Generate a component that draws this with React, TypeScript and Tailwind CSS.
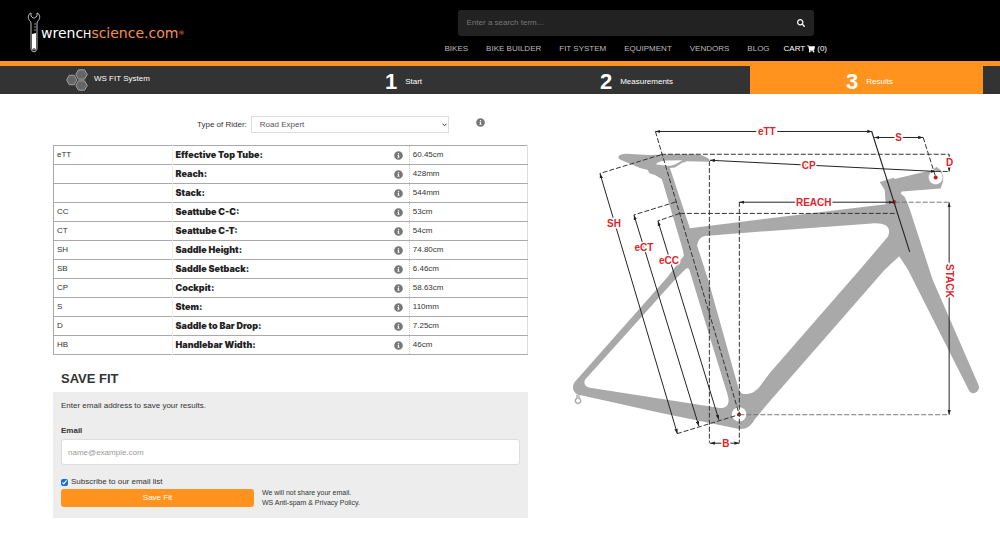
import { useState } from "react";
import { FaInfoCircle, FaSearch, FaShoppingCart } from "react-icons/fa";

type Measurement = {
  code: string;
  label: string;
  value: string;
};

const navLinks = ["BIKES", "BIKE BUILDER", "FIT SYSTEM", "EQUIPMENT", "VENDORS", "BLOG"];

const measurements: Measurement[] = [
  { code: "eTT", label: "Effective Top Tube:", value: "60.45cm" },
  { code: "", label: "Reach:", value: "428mm" },
  { code: "", label: "Stack:", value: "544mm" },
  { code: "CC", label: "Seattube C-C:", value: "53cm" },
  { code: "CT", label: "Seattube C-T:", value: "54cm" },
  { code: "SH", label: "Saddle Height:", value: "74.80cm" },
  { code: "SB", label: "Saddle Setback:", value: "6.46cm" },
  { code: "CP", label: "Cockpit:", value: "58.63cm" },
  { code: "S", label: "Stem:", value: "110mm" },
  { code: "D", label: "Saddle to Bar Drop:", value: "7.25cm" },
  { code: "HB", label: "Handlebar Width:", value: "46cm" },
];

function Logo() {
  return (
    <a href="#" className="flex items-center" aria-label="wrenchscience.com">
      <svg width="14" height="42" viewBox="0 0 14 42" fill="none" stroke="#d4d4d4">
        <path
          d="M4 1 C1 2 0.5 6 2.5 8.5 C3.5 9.5 4 10 4 12 V36 C4 41 10 41 10 36 V12 C10 10 10.5 9.5 11.5 8.5 C13.5 6 13 2 10 1 V4 L7.5 6 H6 L4 4 Z"
          strokeWidth="0.9"
        />
        <path d="M5 22 L9 21 V36 C9 39 5 39 5 36 Z" fill="#fff" stroke="none" />
        <path d="M9 12h-2M9 15h-2M9 18h-2" strokeWidth="0.7" />
        <circle cx="7" cy="37" r="1" fill="#555" stroke="none" />
      </svg>
      <span className="flex items-baseline pt-[2px] font-['DejaVu_Sans'] text-[14px] leading-5 text-white">
        wrenc<span className="text-[11px]">H</span>
        <span className="text-[#f2934a]">science.com</span>
        <sup className="text-[6px] text-[#f2934a]">®</sup>
      </span>
    </a>
  );
}

function Header() {
  return (
    <header className="flex justify-between border-b-[5px] border-[#ff931e] bg-black pl-[27px]">
      <div className="pt-3">
        <Logo />
      </div>
      <div className="mr-[173px] pt-[10px]">
        <form className="mx-[13px] flex h-[26px] items-center rounded-[3px] bg-[#222] px-[9px]">
          <input
            type="search"
            aria-label="Search"
            placeholder="Enter a search term..."
            className="min-w-0 flex-1 bg-transparent text-white outline-none placeholder:text-[#777]"
          />
          <button type="submit" aria-label="Submit search" className="text-white">
            <FaSearch size={8} />
          </button>
        </form>
        <nav className="flex h-[25px] items-center gap-[18px] text-[#bbb]">
          {navLinks.map((link) => (
            <a key={link} href="#">
              {link}
            </a>
          ))}
          <a href="#" className="-ml-1 flex items-center gap-[2px] text-white">
            CART <FaShoppingCart size={8} /> (0)
          </a>
        </nav>
      </div>
    </header>
  );
}

function Hexagons() {
  return (
    <svg width="22" height="22" viewBox="0 0 22 22" fill="#666" stroke="#aaa" strokeWidth="0.9">
      <path d="M12.5 0.8h6l2.8 4.7-2.8 4.7h-6L9.8 5.5z" />
      <path d="M3.2 6.3h5l2.6 4.7-2.6 4.7h-5L0.6 11z" />
      <path d="M12.5 11.8h6l2.8 4.7-2.8 4.7h-6l-2.7-4.7z" />
    </svg>
  );
}

function Steps() {
  const steps = ["Start", "Measurements", "Results"];
  return (
    <div className="bg-[#333] pl-[51px] pr-[17px] text-white">
      <ol className="grid h-7 grid-cols-4">
        <li className="flex items-center gap-[6px] pl-[15px]">
          <Hexagons />
          <span className="pb-[3px]">WS FIT System</span>
        </li>
        {steps.map((step, index) => (
          <li
            key={step}
            className={`flex items-center justify-center gap-2 pl-[6px] pt-[3px] ${
              index === 2 ? "bg-[#ff931e]" : ""
            }`}
          >
            <span className="text-[22px] font-bold leading-6">{index + 1}</span>
            <span>{step}</span>
          </li>
        ))}
      </ol>
    </div>
  );
}

function FitTable() {
  return (
    <table className="w-full table-fixed border-collapse border border-[#aaa] border-r-[#ddd]">
      <colgroup>
        <col className="w-[25%]" />
        <col className="w-[50%]" />
        <col className="w-[25%]" />
      </colgroup>
      <tbody>
        {measurements.map((row) => (
          <tr key={row.label} className="h-[19px] border-b border-[#aaa]">
            <td className="pl-[3px]">{row.code}</td>
            <th
              scope="row"
              className="border-l border-[#eee] pl-[3px] pr-[6px] text-left font-['Inter'] text-[9px] font-black text-[#222]"
            >
              <span className="flex items-center justify-between">
                {row.label}
                <FaInfoCircle size={9} className="text-[#777]" />
              </span>
            </th>
            <td className="border-l border-dotted border-[#ccc] pl-[3px]">{row.value}</td>
          </tr>
        ))}
      </tbody>
    </table>
  );
}

function SaveFit() {
  const [subscribed, setSubscribed] = useState(true);
  return (
    <section>
      <h2 className="px-2 pb-[5px] pt-4 text-[13px] font-bold leading-4">SAVE FIT</h2>
      <form className="bg-[#ededed] px-2 pb-[10px] pt-2">
        <p className="leading-3">Enter email address to save your results.</p>
        <label htmlFor="email" className="mt-[13px] block font-bold leading-3">
          Email
        </label>
        <input
          id="email"
          type="email"
          placeholder="name@example.com"
          className="mt-[2px] block h-[26px] w-full rounded-[3px] border border-[#ddd] bg-white px-[6px] outline-none placeholder:text-[#999]"
        />
        <div className="mt-[11px] flex items-center gap-[3px] leading-3">
          <input
            id="subscribe"
            type="checkbox"
            checked={subscribed}
            onChange={(e) => setSubscribed(e.target.checked)}
            className="size-[7px] accent-[#0b6fd6]"
          />
          <label htmlFor="subscribe">Subscribe to our email list</label>
        </div>
        <div className="flex items-center gap-2">
          <button type="submit" className="h-[18px] w-[42%] rounded-[3px] bg-[#ff931e] text-white">
            Save Fit
          </button>
          <p className="text-[7px] leading-[10px]">
            We will not share your email.
            <br />
            WS Anti-spam &amp; Privacy Policy.
          </p>
        </div>
      </form>
    </section>
  );
}

function BikeDiagram() {
  return (
    <svg
      viewBox="560 110 440 350"
      className="block w-full font-['Liberation_Sans']"
      role="img"
      aria-label="Bike fit dimensions"
    >
      <defs>
        <marker id="arrow" viewBox="0 0 6 4" refX="6" refY="2" markerWidth="5" markerHeight="4" orient="auto-start-reverse">
          <path d="M0 0L6 2L0 4z" fill="#222" />
        </marker>
      </defs>

      {/* Frame, saddle, stem and fork */}
      <path
        fill="#a9a9a9"
        fillRule="evenodd"
        d="M618.3 157.5C618.5 155 622 153.8 627 153.8L648 155L661 154.8L672 154.2L690 154.3C701 154.3 706 156 710 160L708.5 161.7L687 161.2L682 163L675 167.5L670 168L690 228.3L770 218.3L886 204.3L885 190L880 182L894 177.7L895 179L922 172.5L933 170.5L936.7 166.7L942 171L943.5 181L941 188.6L902 191.5L901 193.5L905 197L909 206L933 280L979 385.5C981 393 972 396 969.5 391L908.3 270L899.5 256.5L885 270L770 401.5L755 419.5C750 427.5 746 430 738 429L660 413L581 395.5C574 395 571 388 574.5 382.5L667 278L684 256L683 250L663.3 183.5L661.7 179L655 175L649.3 173.3L648 170L640 168L620 159.5Z
           M655.7 164.3C658 162 662 160.7 667 160.5L682.7 160.3L675 164.5C671 166.5 664 165.8 655.7 164.3Z
           M705 236.2L770 231L872 223.5C886 222.5 892 227 888.3 236.7L860 270L770 373.3L760 386.7C754 393.5 750 394.5 743.3 394.3C741 393.5 739.5 391 738.5 388L708.3 280L697.3 246C698 240 701 237 705 236.2Z
           M675 280L686 269Q688.5 267.5 689.5 270L706.7 326.7L728 396C730 403 728 408.5 720 408.3L590 388C585 387 583.5 384 585 380Z"
      />
      <path d="M577 395v3.5a2.7 2.7 0 1 0 2 0v-3" fill="none" stroke="#a9a9a9" strokeWidth="1.4" />
      <circle cx="936" cy="177.5" r="7.3" fill="#fff" stroke="#a9a9a9" strokeWidth="0.7" />
      <circle cx="739.3" cy="414.7" r="7.2" fill="#fff" />
      <circle cx="936" cy="177.5" r="2" fill="#c9151e" />
      <circle cx="894.5" cy="202" r="2" fill="#c9151e" />
      <circle cx="739.3" cy="414.7" r="2" fill="#c9151e" />

      {/* Reference lines */}
      <g fill="none" stroke="#333" strokeWidth="1" strokeDasharray="5 2">
        <path d="M655.5 131.5L739.5 415" />
        <path d="M661 154.8L600 173.5" />
        <path d="M661 154.3H949.5" />
        <path d="M676 202L634 215" />
        <path d="M680 213.5L658 221" />
        <path d="M680 213.5H898" />
        <path d="M709.5 161V443" />
        <path d="M739.5 202V443" />
        <path d="M677 434L739 415" />
        <path d="M923.5 137.5L936 177" />
        <path d="M936 171.5H949.5" />
      </g>
      <g fill="none" stroke="#777" strokeWidth="1" strokeDasharray="5 2">
        <path d="M895 202.3H949.5" />
        <path d="M739.5 415H949.5" />
      </g>

      {/* Dimension lines, broken where a label sits on them */}
      <path d="M872 131.5L910 252" stroke="#222" strokeWidth="1.1" />
      <g fill="none" stroke="#222" strokeWidth="1">
        <path d="M756.5 131.5H655.5" markerEnd="url(#arrow)" />
        <path d="M777.5 131.5H872.5" markerEnd="url(#arrow)" />
        <path d="M600 173.5L677.5 434" markerStart="url(#arrow)" markerEnd="url(#arrow)" />
        <path d="M634 215L699 426.5" markerStart="url(#arrow)" markerEnd="url(#arrow)" />
        <path d="M658 221L719 420" markerStart="url(#arrow)" markerEnd="url(#arrow)" />
        <path d="M710 160.3L936 171.5" markerStart="url(#arrow)" markerEnd="url(#arrow)" />
        <path d="M739.5 202.3H894" markerStart="url(#arrow)" markerEnd="url(#arrow)" />
        <path d="M874.5 137.5H923.5" markerStart="url(#arrow)" markerEnd="url(#arrow)" />
        <path d="M949.5 154.5V171.5" markerStart="url(#arrow)" markerEnd="url(#arrow)" />
        <path d="M949.5 202.5V415" markerStart="url(#arrow)" markerEnd="url(#arrow)" />
        <path d="M710 443.5H739.5" markerStart="url(#arrow)" markerEnd="url(#arrow)" />
      </g>

      <g
        fill="#e0242b"
        stroke="#fff"
        strokeWidth="3"
        paintOrder="stroke"
        fontSize="10"
        fontWeight="bold"
        textAnchor="middle"
      >
        <text x="767" y="135">eTT</text>
        <text x="899" y="141">S</text>
        <text x="950" y="166">D</text>
        <text x="809" y="169">CP</text>
        <text x="814" y="206">REACH</text>
        <text x="614" y="227">SH</text>
        <text x="644" y="251">eCT</text>
        <text x="669" y="264">eCC</text>
        <text x="726" y="447">B</text>
        <text transform="translate(946 281) rotate(90)">STACK</text>
      </g>
    </svg>
  );
}

export default function App() {
  return (
    <div className="min-h-screen bg-white font-['Liberation_Sans',sans-serif] text-[8px] leading-3 text-[#333]">
      <Header />
      <Steps />
      <main className="flex items-start pl-[53px]">
        <div className="w-[50.2%] shrink-0 pt-[22px]">
          <div className="mb-3 flex items-center pl-[144px]">
            <label htmlFor="rider">Type of Rider:</label>
            <div className="relative ml-1">
              <select
                id="rider"
                className="block h-[17px] w-[198px] appearance-none border border-[#ddd] bg-white px-2 text-[#555]"
              >
                <option>Road Expert</option>
              </select>
              <svg
                className="pointer-events-none absolute right-[2px] top-[7px]"
                width="5"
                height="4"
                viewBox="0 0 5 4"
                fill="none"
                stroke="#333"
              >
                <path d="M0.5 0.7L2.5 2.7L4.5 0.7" />
              </svg>
            </div>
            <FaInfoCircle size={9} className="mb-1 ml-[27px] text-[#777]" />
          </div>
          <FitTable />
          <SaveFit />
        </div>
        <div className="ml-8 min-w-0 flex-1 pt-4">
          <BikeDiagram />
        </div>
      </main>
    </div>
  );
}
